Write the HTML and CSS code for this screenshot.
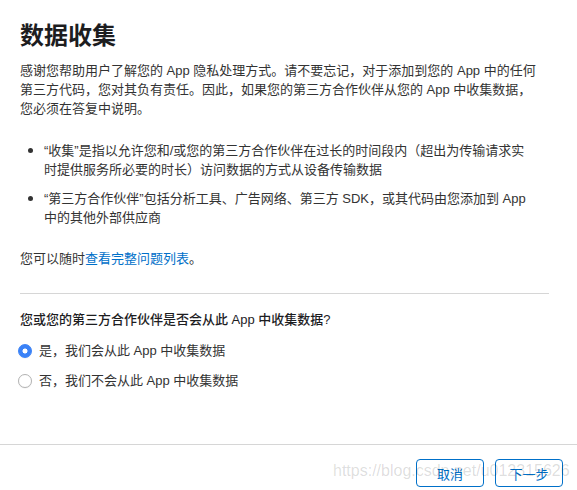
FILE: index.html
```html
<!DOCTYPE html>
<html lang="zh-CN">
<head>
<meta charset="utf-8">
<title>数据收集</title>
<link rel="stylesheet" href="styles.css">
</head>
<body>
<div class="page">
  <main class="main">
    <h1 class="title">数据收集</h1>
    <p class="intro">感谢您帮助用户了解您的 App 隐私处理方式。请不要忘记，对于添加到您的 App 中的任何第三方代码，您对其负有责任。因此，如果您的第三方合作伙伴从您的 App 中收集数据，您必须在答复中说明。</p>
    <ul class="defs">
      <li class="def">“收集”是指以允许您和/或您的第三方合作伙伴在过长的时间段内（超出为传输请求实时提供服务所必要的时长）访问数据的方式从设备传输数据</li>
      <li class="def">“第三方合作伙伴”包括分析工具、广告网络、第三方 SDK，或其代码由您添加到 App 中的其他外部供应商</li>
    </ul>
    <p class="more">您可以随时<a class="link" href="#">查看完整问题列表</a>。</p>
    <div class="divider"></div>
    <p class="question">您或您的第三方合作伙伴是否会从此 App 中收集数据?</p>
    <div class="options">
      <div class="option"><span class="radio radio-on"></span><span>是，我们会从此 App 中收集数据</span></div>
      <div class="option"><span class="radio"></span><span>否，我们不会从此 App 中收集数据</span></div>
    </div>
  </main>
  <footer class="footer">
    <button class="btn">取消</button>
    <button class="btn">下一步</button>
    <span class="watermark">https://blog.csdn.net/u012315626</span>
  </footer>
</div>
</body>
</html>
```
FILE: styles.css
```css
* { box-sizing: border-box; }
html, body { margin: 0; padding: 0; background: #fff; }
body {
  font-family: "Liberation Sans", "Noto Sans CJK SC", sans-serif;
  font-size: 13px;
  line-height: 19px;
  color: #333;
}
.page {
  height: 490px;
  display: flex;
  flex-direction: column;
  overflow: hidden;
}
.main {
  flex: 1;
  padding: 20px 28px 0 20px;
}
.title {
  margin: 0;
  font-size: 24px;
  line-height: 32px;
  font-weight: 700;
  color: #1d1d1f;
}
.intro {
  margin: 9px 0 0;
  max-width: 520px;
}
.defs {
  list-style: none;
  margin: 23px 0 0;
  padding: 0;
  max-width: 507px;
}
.def {
  display: flex;
}
.def + .def { margin-top: 10px; }
.def::before {
  content: "";
  flex: none;
  width: 5px;
  height: 5px;
  border-radius: 50%;
  background: #333;
  margin: 7px 11px 0 8px;
}
.more {
  margin: 22px 0 0;
}
.link {
  color: #0070c9;
  text-decoration: none;
}
.divider {
  margin-top: 25px;
  height: 1px;
  background: #d6d6d6;
}
.question {
  margin: 16px 0 0;
  font-weight: 500;
  color: #1d1d1f;
}
.options {
  margin-top: 12px;
  display: flex;
  flex-direction: column;
  gap: 11px;
}
.option {
  display: flex;
  align-items: center;
  gap: 7px;
  height: 19px;
}
.radio {
  flex: none;
  width: 14px;
  height: 14px;
  margin-left: -2px;
  border-radius: 50%;
  border: 1px solid #b3b3b3;
  background: #fff;
  box-shadow: 0 0.5px 1px rgba(0,0,0,0.08);
}
.radio-on {
  border-color: #3a82f7;
  background: radial-gradient(circle, #fff 0 2.2px, #3a82f7 2.8px);
}
.footer {
  position: relative;
  flex: none;
  height: 46px;
  border-top: 1px solid #d6d6d6;
  display: flex;
  justify-content: flex-end;
  align-items: flex-start;
  gap: 11px;
  padding: 14px 14px 0 0;
}
.btn {
  width: 68px;
  height: 28px;
  border: 1px solid #0070c9;
  border-radius: 4px;
  background: #fff;
  color: #0070c9;
  font-family: "Liberation Sans", "Noto Sans CJK SC", sans-serif;
  font-size: 13px;
  padding: 0;
}
.watermark {
  position: absolute;
  left: 333px;
  top: 18px;
  font-family: "Liberation Sans", sans-serif;
  font-size: 16px;
  line-height: 16px;
  color: rgba(0,0,0,0.14);
  pointer-events: none;
  white-space: nowrap;
}
```
